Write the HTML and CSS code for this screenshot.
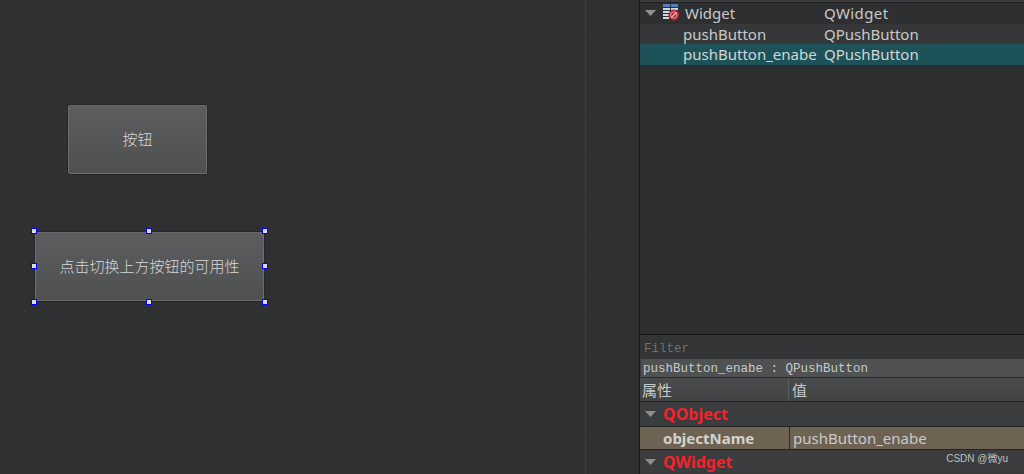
FILE: index.html
```html
<!DOCTYPE html>
<html lang="zh">
<head>
<meta charset="utf-8">
<title>Qt Designer</title>
<link rel="stylesheet" href="styles.css">
</head>
<body>
<div class="app">
  <main class="canvas">
    <button class="fbtn btn-a">按钮</button>
    <div class="fbtn btn-b">点击切换上方按钮的可用性
      <i class="h tl"></i><i class="h tc"></i><i class="h tr"></i>
      <i class="h ml"></i><i class="h mr"></i>
      <i class="h bl"></i><i class="h bc"></i><i class="h br"></i>
    </div>
  </main>
  <div class="gutter"></div>
  <aside class="side">
    <section class="tree">
      <div class="tree-head"></div>
      <div class="trow r0">
        <div class="c1 root">
          <svg class="arrow" width="11" height="6" viewBox="0 0 11 6"><path d="M0 0h11L5.5 6z" fill="#8e8f8f"/></svg>
          <svg class="wicon" width="17" height="17" viewBox="0 0 17 17">
            <path d="M0 0h7v3H0zM8 0h7v3H8z" fill="#4f7fc0"/>
            <path d="M0 4h7v2H0zM8 4h7v2H8zM0 7h7v2H0zM0 10h7v2H0zM0 13h6v2H0z" fill="#cfd8e6"/>
            <circle cx="10.8" cy="11" r="5.4" fill="#b3262a"/>
            <circle cx="10.8" cy="11" r="3.2" fill="none" stroke="#e8a0a0" stroke-width="1"/>
            <path d="M8.3 13.5l5-5" stroke="#f0b8b8" stroke-width="1.2"/>
          </svg>
          <span>Widget</span>
        </div>
        <div class="c2 wide">QWidget</div>
      </div>
      <div class="trow r1"><div class="c1">pushButton</div><div class="c2">QPushButton</div></div>
      <div class="trow r2"><div class="c1">pushButton_enabe</div><div class="c2">QPushButton</div></div>
    </section>
    <section class="props">
      <div class="filter">Filter</div>
      <div class="objlabel">pushButton_enabe : QPushButton</div>
      <div class="phead"><div class="pc1">属性</div><div class="pc2">值</div></div>
      <div class="group">
        <svg class="arrow" width="11" height="6" viewBox="0 0 11 6"><path d="M0 0h11L5.5 6z" fill="#8e8f8f"/></svg>
        <span>QObject</span>
      </div>
      <div class="prow"><div class="pn">objectName</div><div class="pv">pushButton_enabe</div></div>
      <div class="group g2">
        <svg class="arrow" width="11" height="6" viewBox="0 0 11 6"><path d="M0 0h11L5.5 6z" fill="#8e8f8f"/></svg>
        <span>QWidget</span>
      </div>
      <div class="mark">CSDN @微yu</div>
    </section>
  </aside>
</div>
</body>
</html>
```
FILE: styles.css
```css
* { box-sizing: border-box; }
html, body { margin: 0; height: 100%; overflow: hidden; background: #2e2f31; }
body { font-family: "Noto Sans", "Noto Sans CJK SC", sans-serif; color: #c8c9c9; }
.app { display: flex; width: 1024px; height: 474px; }

.canvas {
  position: relative;
  width: 585px;
  background-color: #2f3032;
  background-image: radial-gradient(circle at 0.5px 0.5px, #404143 0.72px, transparent 0.75px);
  background-size: 10px 10px;
  background-position: 4px 1px;
}
.fbtn {
  position: absolute;
  display: flex;
  align-items: center;
  justify-content: center;
  padding: 0 0 3px;
  font: 300 15px "Noto Sans CJK SC", sans-serif;
  color: #d6d7d7;
  background: linear-gradient(#5c5d5f, #4f5050);
  border: 1px solid #6c6d6e;
  border-top-color: #656667;
  box-shadow: 0 1px 0 #242527, 0 -1px 0 #27282a, 1px 0 0 #27282a, -1px 0 0 #27282a;
}
.btn-a { left: 68px; top: 105px; width: 139px; height: 69px; border-radius: 2px; }
.btn-b { left: 35px; top: 232px; width: 229px; height: 69px; }
.h {
  position: absolute;
  width: 6px;
  height: 6px;
  background: #dcdcec;
  border: 1px solid #0000ff;
}
.tl { left: -5px; top: -5px; }
.tc { left: 110px; top: -5px; }
.tr { left: 226px; top: -5px; }
.ml { left: -5px; top: 30px; }
.mr { left: 226px; top: 30px; }
.bl { left: -5px; top: 66px; }
.bc { left: 110px; top: 66px; }
.br { left: 226px; top: 66px; }

.gutter { width: 54px; border-left: 1px solid #3e3f41; background: #2f3032; }

.side { display: flex; flex-direction: column; width: 385px; border-left: 1px solid #161719; }
.tree { flex: 1; display: flex; flex-direction: column; background: #2d2e30; }
.tree-head { height: 3px; background: #3c3d3f; border-bottom: 1px solid #1e1f21; }
.trow { display: flex; align-items: center; font-size: 15px; line-height: 20px; color: #c8c9c9; }
.r0 { height: 21px; padding-bottom: 2px; background: #2e2f31; }
.r1 { height: 20px; background: #363739; }
.r2 { height: 21px; padding-bottom: 2px; background: #1d5259; color: #d2d6d6; }
.c1 { width: 184px; padding-left: 43px; white-space: nowrap; overflow: hidden; }
.wide { letter-spacing: 0.4px; }
.root { display: flex; align-items: center; padding-left: 5px; }
.arrow { flex: none; }
.wicon { margin-left: 7px; margin-right: 5px; flex: none; }

.props { height: 140px; flex: none; position: relative; background: #3a3b3d; border-top: 1px solid #141517; }
.filter { height: 24px; padding: 6px 0 0 4px; background: #333436; font: 12.5px/16px "Liberation Mono", monospace; color: #6f7070; }
.objlabel { height: 19px; margin-left: 1px; padding: 1px 0 0 2px; background: #505152; font: 12.5px/19px "Liberation Mono", monospace; color: #c5c9c9; border-bottom: 1px solid #2a2b2d; }
.phead { display: flex; height: 24px; background: linear-gradient(#4a4b4c, #424344); border-bottom: 1px solid #232426; font-size: 15px; line-height: 24px; }
.pc1 { width: 149px; padding-left: 2px; border-right: 1px solid #5a5b5c; }
.pc2 { padding-left: 3px; }
.group { display: flex; align-items: center; height: 24px; padding-left: 5px; background: #3b3c3e; font-size: 16px; font-weight: 700; color: #f5222b; }
.group span { margin-left: 7px; }
.prow { display: flex; height: 24px; background: #6e6353; border-top: 1px solid #232426; border-bottom: 1px solid #232426; font-size: 15px; line-height: 22px; }
.pn { width: 150px; padding-left: 23px; font-weight: 700; color: #d3d2cd; border-right: 1px solid #2a2b2d; }
.pv { padding-left: 3px; color: #c9cacb; }
.g2 { height: 23px; }
.mark { position: absolute; right: 16px; bottom: 9px; font: 10px "Liberation Sans", "Noto Sans CJK SC", sans-serif; color: #bfc0c0; }
```
